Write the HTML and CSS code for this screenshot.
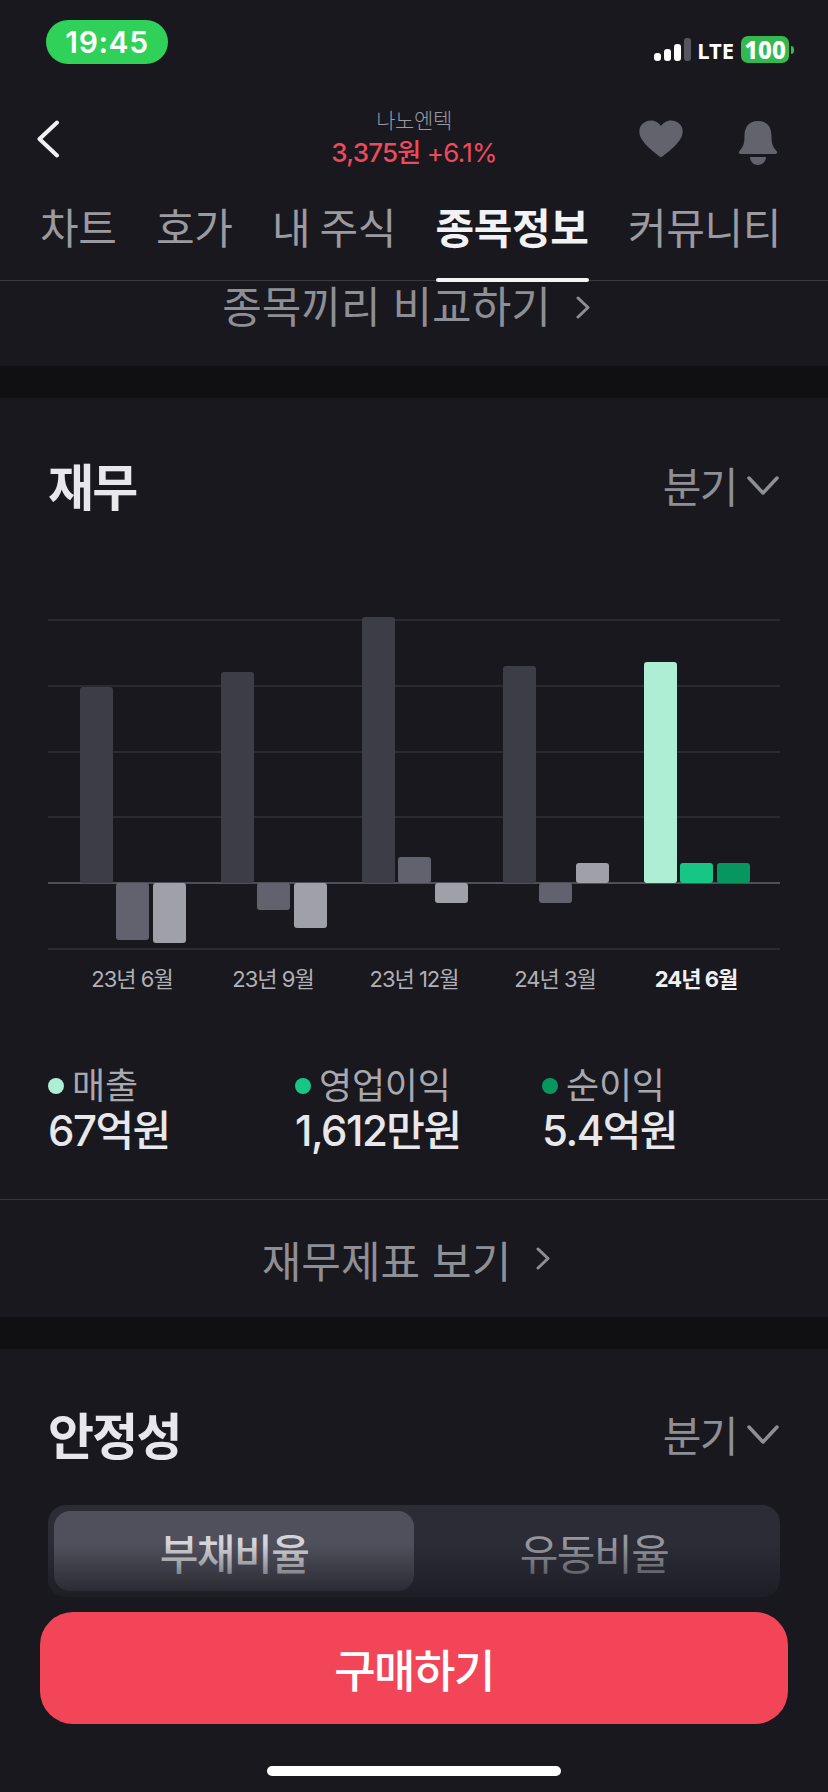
FILE: index.html
```html
<!DOCTYPE html>
<html lang="ko">
<head>
<meta charset="utf-8">
<title>나노엔텍</title>
<link rel="stylesheet" href="styles.css">
</head>
<body>
<div class="screen">
  <div class="status">
    <div class="clock">19:45</div>
    <div class="sys">
      <div class="signal"><i class="s1"></i><i class="s2"></i><i class="s3"></i><i class="s4"></i></div>
      <span class="lte">LTE</span>
      <div class="batt"><span class="batt-body">100</span><i class="batt-nub"></i></div>
    </div>
  </div>
  <header class="head">
    <svg class="back" width="24" height="38" viewBox="0 0 24 38"><path d="M21 2.500 L3.500 19 L21 35.500" fill="none" stroke="#f2f2f4" stroke-width="4" stroke-linecap="round" stroke-linejoin="round"/></svg>
    <div class="title">
      <div class="name">나노엔텍</div>
      <div class="price"><b>3,375원</b> +6.1%</div>
    </div>
    <div class="actions">
      <svg width="44" height="38" viewBox="0 0 44 38"><path d="M22 37.500 C20 36 3 24 .8 15 C-1.500 6 5 .5 12 .5 C16.500 .5 20 3 22 6 C24 3 27.500 .5 32 .5 C39 .5 45.500 6 43.200 15 C41 24 24 36 22 37.500Z" fill="#63636e"/></svg>
      <svg width="40" height="46" viewBox="0 0 40 46"><path d="M20 1 C10 1 6.500 8 6.500 16 C6.500 24 5 27 1.500 31 C0 32.500 1 34 3 34 L37 34 C39 34 40 32.500 38.500 31 C35 27 33.500 24 33.500 16 C33.500 8 30 1 20 1Z M12 37 L28 37 C28 41.500 24.500 45 20 45 C15.500 45 12 41.500 12 37Z" fill="#63636e"/></svg>
    </div>
  </header>
  <nav class="tabs">
    <span class="tab">차트</span>
    <span class="tab">호가</span>
    <span class="tab">내 주식</span>
    <span class="tab active">종목정보</span>
    <span class="tab">커뮤니티</span>
  </nav>
  <a class="link compare">종목끼리 비교하기<svg class="chev" width="14" height="23" viewBox="0 0 14 23"><path d="M2 2 L12 11.500 L2 21" fill="none" stroke="#8e8e96" stroke-width="3" stroke-linecap="round" stroke-linejoin="round"/></svg></a>
  <div class="strip"></div>
  <section class="finance">
    <div class="sec-head">
      <h2>재무</h2>
      <span class="period">분기<svg width="32" height="19" viewBox="0 0 32 19"><path d="M2 2 L16 17 L30 2" fill="none" stroke="#8e8e96" stroke-width="3.500" stroke-linecap="round" stroke-linejoin="round"/></svg></span>
    </div>
    <div class="plot">
      <div class="rules"><i></i><i></i><i></i><i></i><i class="zero"></i><i></i></div>
      <div class="groups">
        <div class="group">
          <div class="col"><div class="up"><i class="bar c1" style="height:196px"></i></div></div>
          <div class="col"><div class="up"></div><i class="bar c2" style="height:57px"></i></div>
          <div class="col"><div class="up"></div><i class="bar c3" style="height:60px"></i></div>
        </div>
        <div class="group">
          <div class="col"><div class="up"><i class="bar c1" style="height:211px"></i></div></div>
          <div class="col"><div class="up"></div><i class="bar c2" style="height:27px"></i></div>
          <div class="col"><div class="up"></div><i class="bar c3" style="height:45px"></i></div>
        </div>
        <div class="group">
          <div class="col"><div class="up"><i class="bar c1" style="height:266px"></i></div></div>
          <div class="col"><div class="up"><i class="bar c2" style="height:26px"></i></div></div>
          <div class="col"><div class="up"></div><i class="bar c3" style="height:20px"></i></div>
        </div>
        <div class="group">
          <div class="col"><div class="up"><i class="bar c1" style="height:217px"></i></div></div>
          <div class="col"><div class="up"></div><i class="bar c2" style="height:20px"></i></div>
          <div class="col"><div class="up"><i class="bar c3" style="height:20px"></i></div></div>
        </div>
        <div class="group">
          <div class="col"><div class="up"><i class="bar g1" style="height:221px"></i></div></div>
          <div class="col"><div class="up"><i class="bar g2" style="height:20px"></i></div></div>
          <div class="col"><div class="up"><i class="bar g3" style="height:20px"></i></div></div>
        </div>
      </div>
    </div>
    <div class="xlabels">
      <span>23년 6월</span><span>23년 9월</span><span>23년 12월</span><span>24년 3월</span><span class="cur">24년 6월</span>
    </div>
    <div class="legend">
      <div class="item"><div class="lab"><i class="dot g1"></i>매출</div><div class="val">67억원</div></div>
      <div class="item"><div class="lab"><i class="dot g2"></i>영업이익</div><div class="val">1,612만원</div></div>
      <div class="item"><div class="lab"><i class="dot g3"></i>순이익</div><div class="val">5.4억원</div></div>
    </div>
    <a class="link report">재무제표 보기<svg class="chev" width="14" height="23" viewBox="0 0 14 23"><path d="M2 2 L12 11.500 L2 21" fill="none" stroke="#8e8e96" stroke-width="3" stroke-linecap="round" stroke-linejoin="round"/></svg></a>
  </section>
  <div class="strip"></div>
  <section class="stability">
    <div class="sec-head">
      <h2>안정성</h2>
      <span class="period">분기<svg width="32" height="19" viewBox="0 0 32 19"><path d="M2 2 L16 17 L30 2" fill="none" stroke="#8e8e96" stroke-width="3.500" stroke-linecap="round" stroke-linejoin="round"/></svg></span>
    </div>
    <div class="segment">
      <span class="seg on">부채비율</span>
      <span class="seg">유동비율</span>
    </div>
  </section>
  <div class="dock">
    <button class="buy">구매하기</button>
    <i class="home"></i>
  </div>
</div>
</body>
</html>
```

FILE: styles.css
```css
* { box-sizing: border-box; }
html, body { margin: 0; padding: 0; background: #18181e; }
body {
  font-family: Inter, "Noto Sans CJK KR", sans-serif;
  color: #e8e8ec;
}
.screen {
  position: relative;
  width: 828px;
  height: 1792px;
  overflow: hidden;
  background: #18181e;
}
i { display: block; }

/* status bar */
.status {
  height: 90px;
  padding: 20px 34px 0 46px;
  display: flex;
  justify-content: space-between;
  align-items: flex-start;
}
.clock {
  width: 122px;
  height: 44px;
  border-radius: 22px;
  background: #30d158;
  color: #fff;
  font-size: 30px;
  font-weight: 600;
  letter-spacing: .6px;
  line-height: 44px;
  text-align: center;
}
.sys {
  margin-top: 16px;
  display: flex;
  align-items: flex-end;
  height: 27px;
}
.signal { display: flex; align-items: flex-end; gap: 3px; height: 23px; margin-bottom: 2px; }
.signal i { width: 7px; border-radius: 3px; background: #fff; }
.s1 { height: 8px; }
.s2 { height: 12px; }
.s3 { height: 17px; }
.signal .s4 { height: 23px; background: #56565e; }
.lte {
  margin: 0 7px 0 6px;
  font-size: 22px;
  line-height: 26px;
  font-weight: 700;
  color: #fff;
  font-family: "Noto Sans", sans-serif;
}
.batt { display: flex; align-items: center; gap: 2px; }
.batt-body {
  width: 48px;
  height: 27px;
  border-radius: 7px;
  background: #34b84f;
  color: #fff;
  font-size: 24px;
  font-weight: 800;
  line-height: 27px;
  text-align: center;
  font-family: "Noto Sans", sans-serif;
}
.batt-nub { width: 3px; height: 8px; background: #34b84f; border-radius: 0 3px 3px 0; }

/* header */
.head {
  position: relative;
  height: 100px;
  display: flex;
  align-items: flex-start;
  justify-content: center;
}
.back { position: absolute; left: 36px; top: 30px; }
.title { text-align: center; margin-top: 16px; }
.name { font-size: 21px; line-height: 29px; color: #9a9aa2; letter-spacing: -.4px; font-weight: 300; }
.price { font-size: 26px; line-height: 35px; color: #ee4a5b; letter-spacing: -.8px; }
.price b { font-weight: 500; }
.actions {
  position: absolute;
  right: 50px;
  top: 30px;
  display: flex;
  gap: 55px;
  align-items: flex-start;
}

/* tabs */
.tabs {
  height: 91px;
  padding: 0 0 0 40px;
  display: flex;
  gap: 39.500px;
  border-bottom: 1px solid #3a3a42;
  align-items: flex-start;
}
.tab {
  position: relative;
  height: 91px;
  padding-top: 9px;
  font-size: 42px;
  line-height: 60px;
  letter-spacing: -.4px;
  word-spacing: -2px;
  color: #9a9aa0;
  font-weight: 400;
  white-space: nowrap;
}
.tab.active { color: #f2f2f4; font-weight: 700; }
.tab.active::after {
  content: "";
  position: absolute;
  left: 0;
  right: 0;
  bottom: -1px;
  height: 4px;
  border-radius: 2px;
  background: #f4f4f6;
}

/* links */
.link {
  display: flex;
  justify-content: center;
  align-items: center;
  color: #8e8e96;
  font-size: 43px;
  letter-spacing: 0;
  font-weight: 400;
  padding-right: 16px;
}
.chev { margin-left: 25px; }
.compare { height: 85px; padding-bottom: 33px; line-height: 52px; overflow: hidden; }
.report { height: 118px; border-top: 1px solid #35353c; margin-top: 46px; }
.strip { height: 32px; background: #101013; }

/* section */
.sec-head {
  display: flex;
  justify-content: space-between;
  align-items: center;
  padding: 0 48px;
  height: 60px;
}
.sec-head h2 {
  margin: 0;
  font-size: 50px;
  font-weight: 700;
  letter-spacing: -1.800px;
  color: #e8e8ec;
}
.period {
  display: flex;
  align-items: center;
  gap: 10px;
  color: #8e8e96;
  font-size: 42px;
  letter-spacing: -1.500px;
}
.period svg { margin-right: 1px; margin-top: 2px; }
.finance { padding-top: 56px; }
.stability { padding-top: 54px; }

/* chart */
.plot {
  position: relative;
  margin: 105px 48px 0;
  height: 331px;
}
.rules {
  height: 100%;
  display: flex;
  flex-direction: column;
  justify-content: space-between;
}
.rules i { height: 2px; background: #2a2a31; }
.rules .zero { background: #4f4f58; }
.groups {
  position: absolute;
  inset: -3px 0 0 0;
  display: grid;
  grid-template-columns: repeat(5, 141px);
  padding-left: 32px;
}
.group { display: flex; gap: 3.300px; align-items: flex-start; }
.col { width: 33px; }
.up { height: 267px; display: flex; align-items: flex-end; }
.bar { width: 33px; border-radius: 3px; }
.c1 { background: #3d3d48; }
.c2 { background: #62626e; }
.c3 { background: #a0a0a8; }
.g1 { background: #aeeed4; }
.g2 { background: #17c684; }
.g3 { background: #06965e; }
.xlabels {
  margin: 14px 48px 0;
  padding: 0 13.500px;
  display: grid;
  grid-template-columns: repeat(5, 1fr);
  text-align: center;
  font-size: 22px;
  line-height: 30px;
  letter-spacing: -1px;
  color: #b0b0b6;
}
.xlabels .cur { color: #f0f0f2; font-weight: 700; }

/* legend */
.legend {
  margin: 70px 0 0 48px;
  display: grid;
  grid-template-columns: repeat(3, 247px);
}
.lab {
  display: flex;
  align-items: center;
  gap: 8px;
  font-size: 36px;
  line-height: 44px;
  color: #a8a8ae;
  letter-spacing: -.2px;
}
.dot { width: 16px; height: 16px; border-radius: 50%; }
.val {
  font-size: 42px;
  line-height: 45px;
  color: #e8e8ec;
  letter-spacing: -1.500px;
  font-weight: 500;
}

/* segmented */
.segment {
  position: relative;
  margin: 42px 48px 0;
  height: 92px;
  padding: 6px;
  border-radius: 18px;
  display: grid;
  grid-template-columns: 360px 1fr;
  background: #2c2c37;
}
.seg {
  display: flex;
  align-items: center;
  justify-content: center;
  font-size: 42px;
  letter-spacing: -1.500px;
  color: #96969e;
  height: 80px;
}
.seg.on {
  background: #50505c;
  border-radius: 16px;
  color: #d4d4d9;
  font-weight: 500;
}

/* dock */
.dock {
  position: absolute;
  left: 0;
  right: 0;
  bottom: 0;
  height: 180px;
  background: #18181e;
  padding: 0 40px;
}
.dock::before {
  content: "";
  position: absolute;
  left: 0;
  right: 0;
  bottom: 100%;
  height: 68px;
  background: linear-gradient(rgba(24, 24, 30, 0), rgba(24, 24, 30, .95));
}
.buy {
  display: block;
  width: 748px;
  height: 112px;
  border: 0;
  border-radius: 33px;
  background: #f24558;
  color: #fff;
  font: 500 45px Inter, "Noto Sans CJK KR", sans-serif;
  letter-spacing: -1.500px;
}
.home {
  width: 294px;
  height: 10px;
  border-radius: 5px;
  background: #fff;
  margin: 42px auto 0;
}
```
